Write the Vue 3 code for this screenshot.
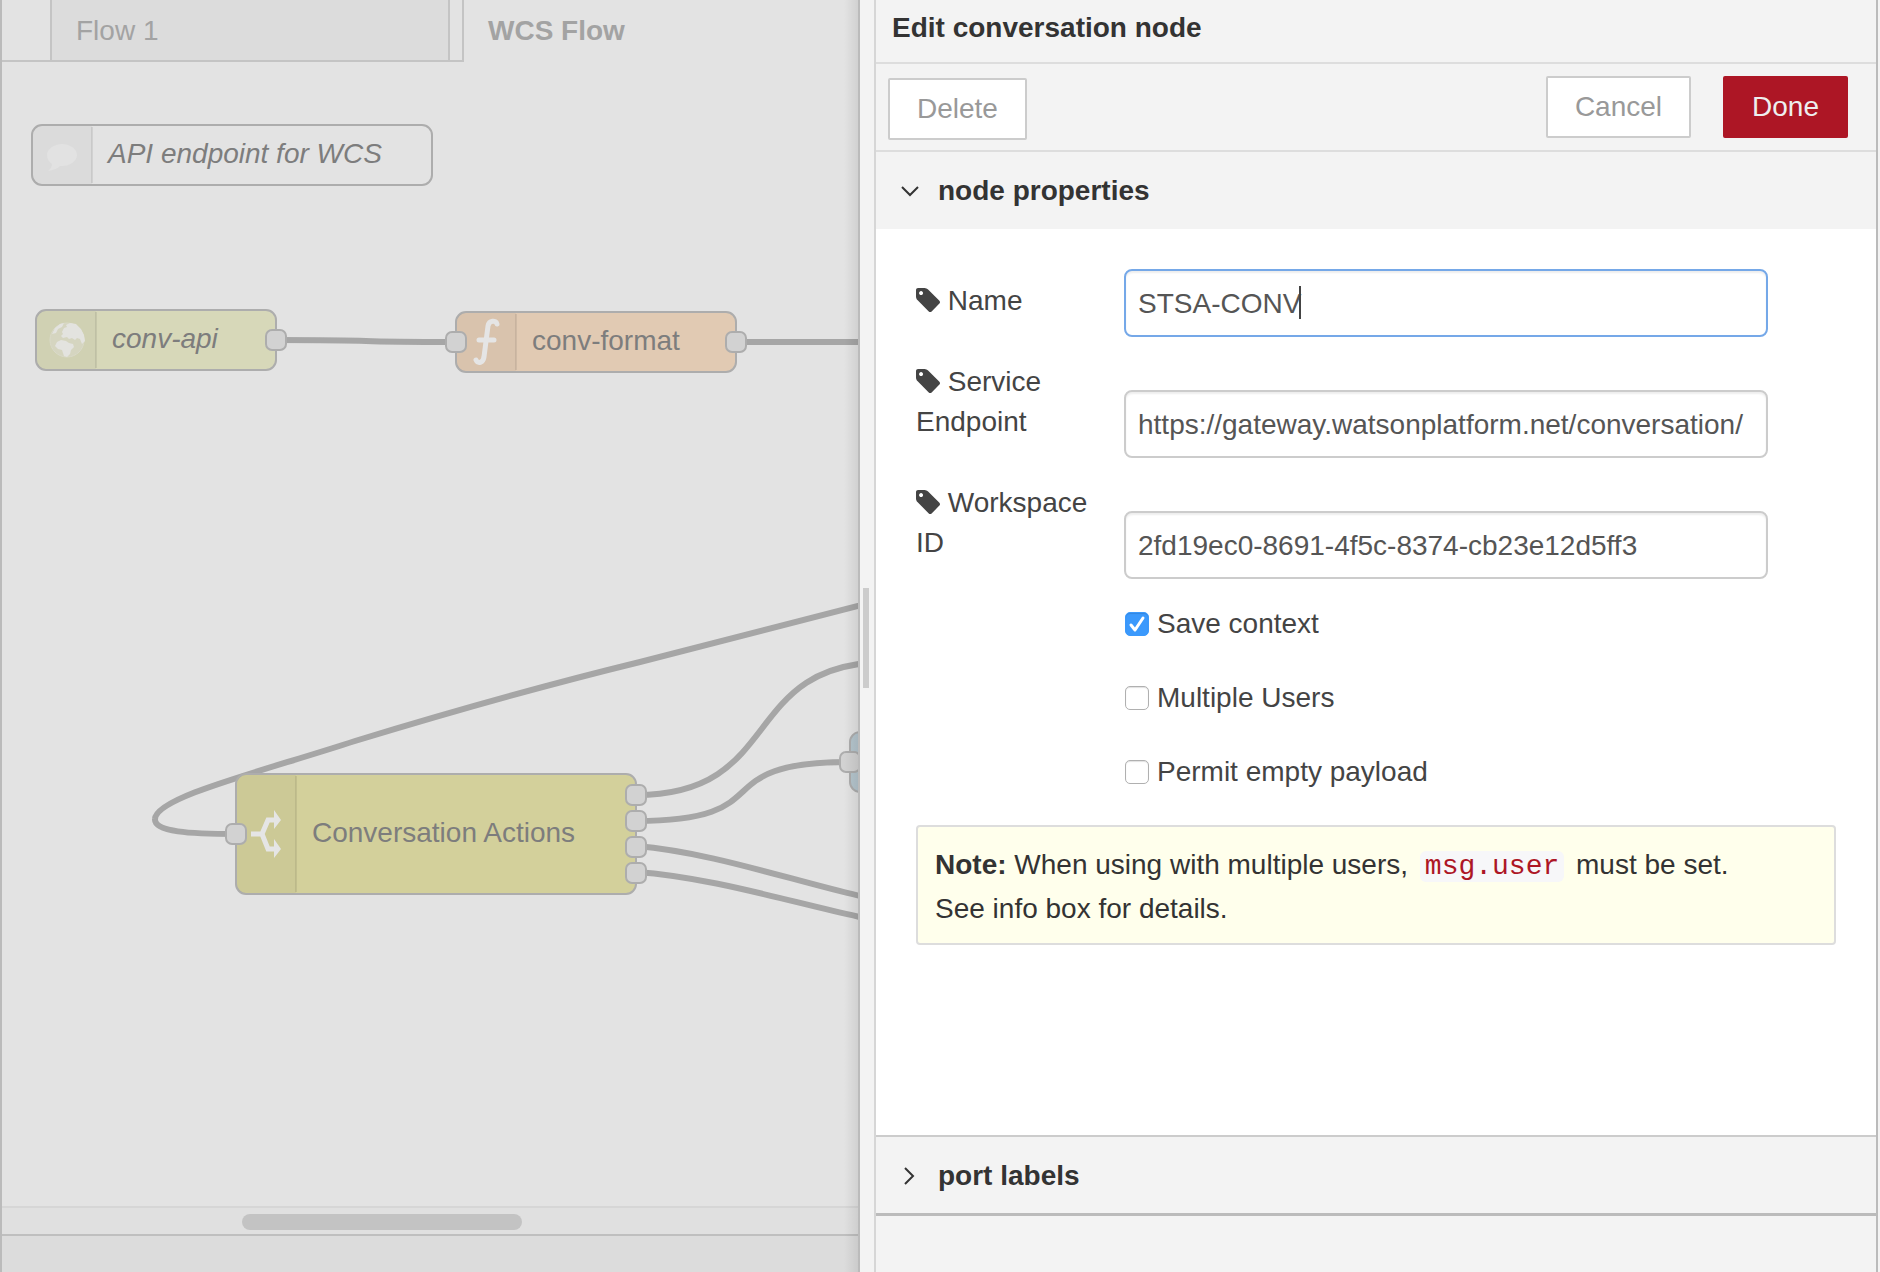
<script setup>
import { ref } from 'vue'

const name = ref('STSA-CONV')
const endpoint = ref('https://gateway.watsonplatform.net/conversation/')
const workspaceId = ref('2fd19ec0-8691-4f5c-8374-cb23e12d5ff3')

const options = ref([
  { id: 'opt-context', label: 'Save context', checked: true },
  { id: 'opt-multi', label: 'Multiple Users', checked: false },
  { id: 'opt-empty', label: 'Permit empty payload', checked: false }
])

const tagPath =
  'M448 448q0-53-37.5-90.5t-90.5-37.5-90.5 37.5-37.5 90.5 37.5 90.5 90.5 37.5 90.5-37.5 37.5-90.5zm1067 576q0 53-37 90l-491 492q-39 37-91 37-53 0-90-37l-715-716q-38-37-64.5-101t-26.5-117v-416q0-52 38-90t90-38h416q53 0 117 26.5t102 64.5l715 714q37 39 37 91z'

/* Nodes and wires in canvas coordinates */
const nodes = [
  { x: 30, y: 63, w: 400, h: 60, fill: '#e3e3e3', label: 'API endpoint for WCS', italic: true, icon: 'comment', ports: [] },
  { x: 34, y: 248, w: 240, h: 60, fill: '#d7d8b9', label: 'conv-api', italic: true, icon: 'globe', ports: [[240, 30]] },
  { x: 454, y: 250, w: 280, h: 60, fill: '#e1cab3', label: 'conv-format', italic: false, icon: 'fn', ports: [[0, 30], [280, 30]] },
  { x: 234, y: 712, w: 400, h: 120, fill: '#d3d09b', label: 'Conversation Actions', italic: false, icon: 'switch', ports: [[0, 60], [400, 21], [400, 47], [400, 73], [400, 99]] },
  { x: 848, y: 670, w: 240, h: 60, fill: '#b5c5cd', label: '', italic: false, icon: '', ports: [[0, 30]] }
]

const wires = [
  'M274 278 C409 278 319 280 454 280',
  'M734 280 H1000',
  'M234 772 C188 772 152 770 153 757 C154 735 258 710 353 679 C448 650 548 622 638 600 L856 544 L1000 507',
  'M634 733 C784 733 736 600 886 600',
  'M634 759 C784 759 698 700 848 700',
  'M634 784 C708 790 788 818 858 834 L1000 872',
  'M634 810 C708 815 788 840 858 855 L1000 887'
]
</script>

<template>
  <div class="editor">
    <main class="workspace">
      <nav class="tabs">
        <a class="tab" href="#flow-1">Flow 1</a>
        <a class="tab active" href="#wcs-flow">WCS Flow</a>
      </nav>

      <div class="canvas">
        <svg class="chart" width="100%" height="100%">
          <path v-for="(d, i) in wires" :key="i" class="wire" :d="d" />
          <g v-for="(n, i) in nodes" :key="i" :transform="`translate(${n.x} ${n.y})`">
            <rect class="node" :width="n.w" :height="n.h" rx="10" :fill="n.fill" />
            <template v-if="n.icon">
              <path class="shade" :d="`M60 1 H10 Q1 1 1 10 V${n.h - 10} Q1 ${n.h - 1} 10 ${n.h - 1} H60 Z`" />
              <path class="divider" :d="`M60 2 V${n.h - 2}`" />
            </template>

            <path v-if="n.icon === 'comment'" fill="#e2e2e2" d="M30 19c8 0 15 5 15 11s-7 11-15 11h-2c-3 3-7 4-12 5 3-2 4-5 4-7-3-2-5-5-5-9 0-6 7-11 15-11z" />
            <g v-if="n.icon === 'globe'">
              <circle cx="31" cy="30" r="17" fill="#d5d5c0" stroke="#dadac9" stroke-width="1" />
              <path fill="#e3e3df" d="M26 22l2-4 3-1-1-2 4-2 6 1 5 5 3 6 1 6-3 3-2-5-3-1-2 2-3-2-3 1-2-2-4 1-2-2 2-2zM21 32l4-2 5 1 3 2 4 1 1 3-3 3-1 4-3 3-3-1-2-6-4-1-3-3zM16 24l3-6 5-4 4-1-2 4-4 2-2 4z" />
            </g>
            <path v-if="n.icon === 'fn'" class="stroke-icon" stroke-width="5" d="M41 12c-1-4-8-4-9 2l-4 31c-1 6-6 7-8 3M23 28h15" />
            <g v-if="n.icon === 'switch'">
              <path class="stroke-icon square" stroke-width="5" d="M15 60h11l6-14h6M26 60l6 15h6" />
              <path fill="#e5e5e5" d="M38 36l7 10-7 9zM38 65l7 10-7 9z" />
            </g>

            <text class="node-label" :class="{ italic: n.italic }" :x="76" :y="n.h / 2 + 8">{{ n.label }}</text>
            <rect v-for="(p, k) in n.ports" :key="k" class="port" :x="p[0] - 10" :y="p[1] - 10" width="20" height="20" rx="6" />
          </g>
        </svg>
      </div>

      <div class="scroll-track"><div class="scroll-thumb"></div></div>
      <footer class="workspace-footer"></footer>
    </main>

    <div class="gutter"><span class="grip"></span></div>

    <aside class="tray">
      <header class="tray-header">Edit conversation node</header>

      <div class="toolbar">
        <button type="button" class="btn delete">Delete</button>
        <button type="button" class="btn cancel">Cancel</button>
        <button type="button" class="btn primary">Done</button>
      </div>

      <button type="button" class="section-head">
        <svg width="20" height="20" viewBox="0 0 20 20"><path d="M2 6l8 8 8-8" /></svg>
        node properties
      </button>

      <form class="form" @submit.prevent>
        <div class="row">
          <label for="f-name"><svg class="tag" viewBox="0 128 1515 1515"><path :d="tagPath" /></svg> Name</label>
          <div class="field">
            <input id="f-name" v-model="name" class="text focused" type="text" />
            <span class="caret"></span>
          </div>
        </div>
        <div class="row">
          <label for="f-endpoint"><svg class="tag" viewBox="0 128 1515 1515"><path :d="tagPath" /></svg> Service Endpoint</label>
          <div class="field"><input id="f-endpoint" v-model="endpoint" class="text" type="text" /></div>
        </div>
        <div class="row">
          <label for="f-workspace"><svg class="tag" viewBox="0 128 1515 1515"><path :d="tagPath" /></svg> Workspace ID</label>
          <div class="field"><input id="f-workspace" v-model="workspaceId" class="text" type="text" /></div>
        </div>

        <div class="checks">
          <label v-for="o in options" :key="o.id" class="check" :for="o.id">
            <span class="box">
              <input :id="o.id" v-model="o.checked" type="checkbox" />
              <svg v-if="o.checked" width="24" height="24" viewBox="0 0 24 24"><path d="M6 13l4 5 8-12" /></svg>
            </span>
            {{ o.label }}
          </label>
        </div>

        <p class="note">
          <b>Note:</b> When using with multiple users, <code>msg.user</code> must be set.<br />
          See info box for details.
        </p>
      </form>

      <button type="button" class="section-head ports">
        <svg width="20" height="20" viewBox="0 0 20 20"><path d="M5 2l8 8-8 8" /></svg>
        port labels
      </button>
      <footer class="tray-footer"></footer>
    </aside>
  </div>
</template>

<style>
body {
  margin: 0;
  background: #f3f3f3;
}
</style>

<style scoped>
.editor,
.editor * {
  box-sizing: border-box;
}

.editor {
  display: grid;
  grid-template-columns: minmax(0, 856fr) 18px minmax(0, 1002fr);
  min-height: 100vh;
  padding-right: 2px;
  border-left: 2px solid #bbb;
  background: #f3f3f3;
  color: #333;
  font: 28px/40px "Liberation Sans", Arial, sans-serif;
}

button,
input {
  font: inherit;
}

.workspace {
  position: relative;
  display: flex;
  flex-direction: column;
  min-width: 0;
  background: #e3e3e3;
}

.workspace::after {
  content: "";
  position: absolute;
  inset: 0 0 0 auto;
  width: 14px;
  background: linear-gradient(to right, rgba(0, 0, 0, 0), rgba(0, 0, 0, 0.08));
}

.tabs {
  display: flex;
  height: 62px;
}

.tabs::before {
  content: "";
  width: 48px;
  border-bottom: 2px solid #c4c4c4;
}

.tab {
  width: 400px;
  padding-left: 24px;
  border: solid #c4c4c4;
  border-width: 0 2px 2px;
  background: #dcdcdc;
  color: #a3a3a3;
  line-height: 62px;
  text-decoration: none;
}

.tab.active {
  position: relative;
  flex: 1;
  margin-left: 12px;
  border-width: 0 0 0 2px;
  background: none;
  font-weight: bold;
}

.tab.active::before {
  content: "";
  position: absolute;
  bottom: 0;
  left: -14px;
  width: 14px;
  border-bottom: 2px solid #c4c4c4;
}

.canvas {
  display: flex;
  flex: 1;
  min-height: 900px;
  overflow: hidden;
}

.chart {
  display: block;
  flex: 1;
  height: auto;
}

.wire {
  fill: none;
  stroke: #a6a6a6;
  stroke-width: 6px;
}

.node {
  stroke: #adadad;
  stroke-width: 2px;
}

.port {
  fill: #d2d2d2;
  stroke: #adadad;
  stroke-width: 2px;
}

.shade {
  fill: rgba(0, 0, 0, 0.03);
}

.divider {
  stroke: rgba(0, 0, 0, 0.08);
  stroke-width: 2px;
}

.stroke-icon {
  fill: none;
  stroke: #e5e5e5;
  stroke-linecap: round;
}

.stroke-icon.square {
  stroke-linecap: butt;
}

.node-label {
  fill: #7d7d7d;
}

.italic {
  font-style: italic;
}

.scroll-track {
  height: 30px;
  padding: 6px 0 4px;
  border-top: 2px solid #d6d6d6;
  border-bottom: 2px solid #bfbfbf;
  background: #e0e0e0;
}

.scroll-thumb {
  width: 280px;
  height: 16px;
  margin-left: 28%;
  border-radius: 8px;
  background: #c3c3c3;
}

.workspace-footer {
  height: 36px;
  background: #dcdcdc;
}

.gutter {
  display: flex;
  align-items: center;
  justify-content: center;
  padding: 4px 2px 0 0;
  border: solid #bbb;
  border-width: 0 2px;
  border-right-color: #d6d6d6;
  background: #f3f3f3;
}

.grip {
  width: 6px;
  height: 100px;
  background: #ccc;
}

.tray {
  display: flex;
  flex-direction: column;
  min-width: 0;
  border-right: 2px solid #bbb;
}

.tray-header {
  padding: 0 16px 6px;
  border-bottom: 2px solid #ddd;
  font-weight: bold;
  line-height: 56px;
}

.toolbar {
  display: flex;
  align-items: flex-start;
  padding: 12px 28px 12px 12px;
  border-bottom: 2px solid #ddd;
}

.btn {
  height: 62px;
  padding: 0 27px;
  border: 2px solid #ccc;
  border-radius: 2px;
  background: #fff;
  color: #999;
}

.btn.delete {
  margin: 2px auto -2px 0;
}

.btn.primary {
  margin-left: 32px;
  border-color: #ad1625;
  background: #ad1625;
  color: #eee;
}

.section-head {
  display: flex;
  align-items: center;
  gap: 18px;
  height: 77px;
  padding: 1px 24px 0;
  border: 0;
  background: #f3f3f3;
  color: #333;
  font-weight: bold;
  text-align: left;
}

.section-head path {
  fill: none;
  stroke: #333;
  stroke-width: 2px;
}

.section-head.ports {
  height: 81px;
  border-top: 2px solid #ccc;
  border-bottom: 3px solid #bbb;
}

.form {
  flex: 1;
  padding: 40px;
  background: #fff;
}

.row {
  display: flex;
  align-items: flex-end;
  margin-bottom: 24px;
}

.row label {
  flex: none;
  width: 200px;
  margin: 0 8px 16px 0;
  color: #444;
}

.row + .row label {
  padding-top: 1px;
}

.tag {
  width: 24px;
  height: 24px;
  vertical-align: -2px;
  fill: #444;
}

.field {
  position: relative;
  width: 70%;
}

.text {
  display: block;
  width: 100%;
  height: 68px;
  padding: 1px 12px 0;
  border: 2px solid #ccc;
  border-radius: 8px;
  outline: 0;
  background: #fff;
  box-shadow: inset 0 2px 2px rgba(0, 0, 0, 0.07);
  color: #555;
}

.text.focused {
  border-color: #75a8e8;
}

.caret {
  position: absolute;
  top: 17px;
  left: 175px;
  width: 2px;
  height: 33px;
  background: #444;
}

.checks {
  display: flex;
  flex-direction: column;
  align-items: flex-start;
  gap: 34px;
  margin: 25px 0 33px 209px;
}

.check {
  display: flex;
  align-items: center;
  gap: 8px;
  color: #444;
}

.box {
  display: grid;
}

.box > * {
  grid-area: 1 / 1;
}

.box input {
  width: 24px;
  height: 24px;
  margin: 0;
  border: 1px solid #b0b0b0;
  border-radius: 5px;
  appearance: none;
  background: #fff;
  box-shadow: inset 0 1px 1px rgba(0, 0, 0, 0.12);
}

.box input:checked {
  border-color: #3b99fc;
  background: #3b99fc;
}

.box svg {
  pointer-events: none;
}

.box path {
  fill: none;
  stroke: #fff;
  stroke-width: 3px;
  stroke-linecap: round;
  stroke-linejoin: round;
}

.note {
  margin: 0;
  padding: 17px 17px 13px;
  border: 2px solid #ddd;
  border-radius: 4px;
  background: #ffffec;
  line-height: 42px;
}

.note code {
  margin: 0 4px;
  padding: 0 5px;
  border-radius: 6px;
  background: #f7f7f9;
  color: #ad1625;
  font-family: "Liberation Mono", "Courier New", monospace;
}

.tray-footer {
  height: 56px;
}
</style>
